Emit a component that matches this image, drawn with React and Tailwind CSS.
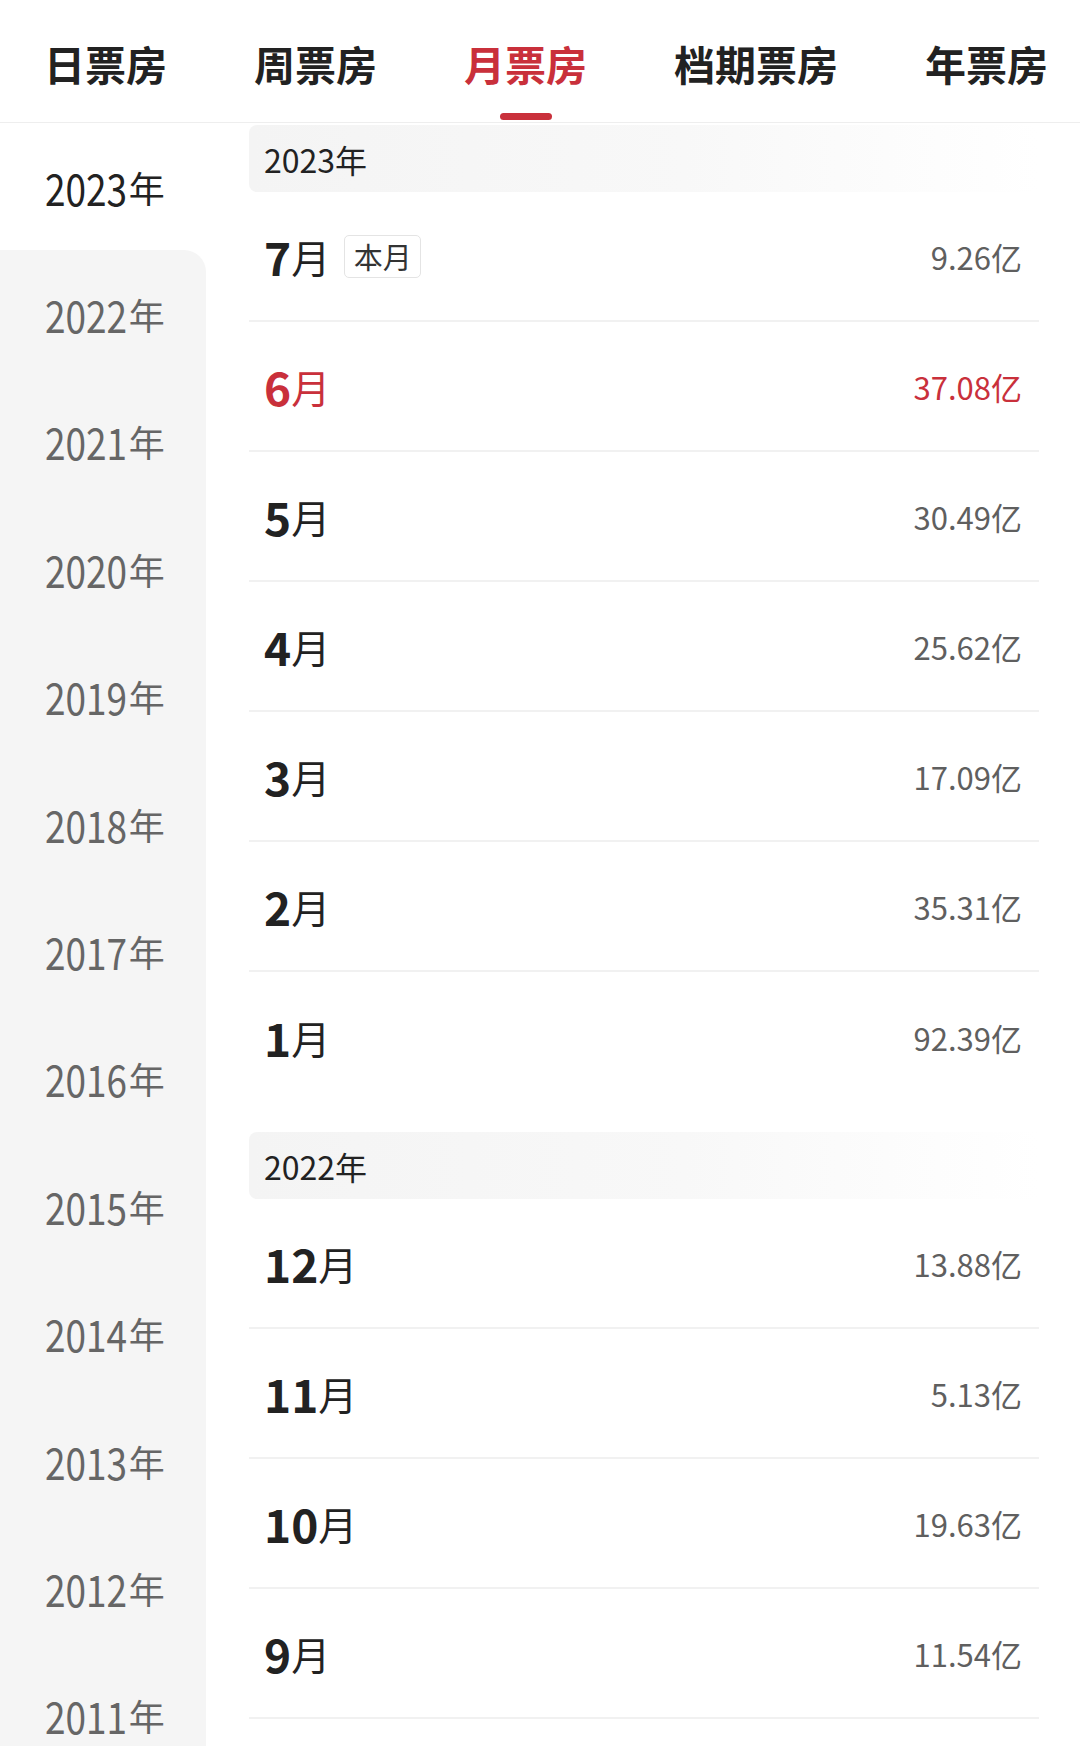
import React from "react";

const CJK = { fontFamily: '"Noto Sans CJK SC", "Noto Sans", sans-serif' };

const tabs = ["日票房", "周票房", "月票房", "档期票房", "年票房"];
const years = ["2023", "2022", "2021", "2020", "2019", "2018", "2017", "2016", "2015", "2014", "2013", "2012", "2011"];

const sections = [
  {
    year: "2023",
    rows: [
      { m: "7", v: "9.26", current: true },
      { m: "6", v: "37.08", red: true },
      { m: "5", v: "30.49" },
      { m: "4", v: "25.62" },
      { m: "3", v: "17.09" },
      { m: "2", v: "35.31" },
      { m: "1", v: "92.39" },
    ],
  },
  {
    year: "2022",
    rows: [
      { m: "12", v: "13.88" },
      { m: "11", v: "5.13" },
      { m: "10", v: "19.63" },
      { m: "9", v: "11.54" },
    ],
  },
];

function YearLabel({ y, active }) {
  return (
    <div style={CJK} className={active ? "flex items-center pl-[45px] text-[#222222]" : "flex items-center pl-[45px] text-[#666666]"}>
      <span className="inline-block origin-left scale-x-[0.84] mr-[-16px] text-[44px] leading-none">{y}</span>
      <span className="text-[36px] leading-none ml-[2px]">年</span>
    </div>
  );
}

function Row({ row, last }) {
  const color = row.red ? "text-[#c9303b]" : "text-[#222222]";
  return (
    <div className={last ? "h-[130px] flex items-center justify-between pl-[15px] pr-[17px]" : "h-[130px] flex items-center justify-between pl-[15px] pr-[17px] border-b-2 border-[#f1f1f1]"}>
      <div style={CJK} className={"flex items-center " + color}>
        <span className="text-[46px] font-bold leading-none">{row.m}</span>
        <span className="text-[39px] leading-none">月</span>
        {row.current && (
          <span className="ml-[14px] h-[43px] w-[77px] flex items-center justify-center border-[1.5px] border-[#e4e4e4] rounded-[5px] text-[29px] leading-none text-[#333333]">
            本月
          </span>
        )}
      </div>
      <div style={CJK} className={row.red ? "text-[31px] leading-none text-[#c9303b]" : "text-[31px] leading-none text-[#5f5f5f]"}>
        {row.v}亿
      </div>
    </div>
  );
}

export default function App() {
  return (
    <div className="w-[1080px] h-[1746px] overflow-hidden bg-white flex flex-col">
      <div className="h-[123px] shrink-0 flex items-stretch pl-[44px] gap-[87px] border-b border-[#eeeeee]">
        {tabs.map((t) => {
          const active = t === "月票房";
          return (
            <div key={t} className="relative flex items-center pt-[4px]">
              <span style={CJK} className={active ? "text-[41px] font-bold leading-none text-[#c9303b]" : "text-[41px] font-bold leading-none text-[#222222]"}>
                {t}
              </span>
              {active && (
                <div className="absolute bottom-[2px] left-1/2 -translate-x-1/2 w-[52px] h-[7px] rounded-full bg-[#c9303b]" />
              )}
            </div>
          );
        })}
      </div>

      <div className="flex flex-1 min-h-0">
        <div className="w-[206px] shrink-0 flex flex-col">
          <div className="h-[127.4px] shrink-0 flex items-center bg-white">
            <YearLabel y={years[0]} active />
          </div>
          <div className="flex-1 bg-[#f5f5f5] rounded-tr-[22px] flex flex-col">
            {years.slice(1).map((y) => (
              <div key={y} className="h-[127.4px] shrink-0 flex items-center">
                <YearLabel y={y} />
              </div>
            ))}
          </div>
        </div>

        <div className="flex-1 pl-[43px] pr-[41px] pt-[2px] flex flex-col">
          {sections.map((s) => (
            <div key={s.year} className="flex flex-col pb-[30px]">
              <div className="h-[67px] flex items-center pl-[15px] rounded-l-[8px] bg-linear-to-r from-[#f4f4f4] via-[#f8f8f8] via-55% to-white to-100%">
                <span style={CJK} className="text-[32px] leading-none text-[#222222]">{s.year}年</span>
              </div>
              {s.rows.map((r, i) => (
                <Row key={r.m} row={r} last={i === s.rows.length - 1 && s.year === "2023"} />
              ))}
            </div>
          ))}
        </div>
      </div>
    </div>
  );
}
